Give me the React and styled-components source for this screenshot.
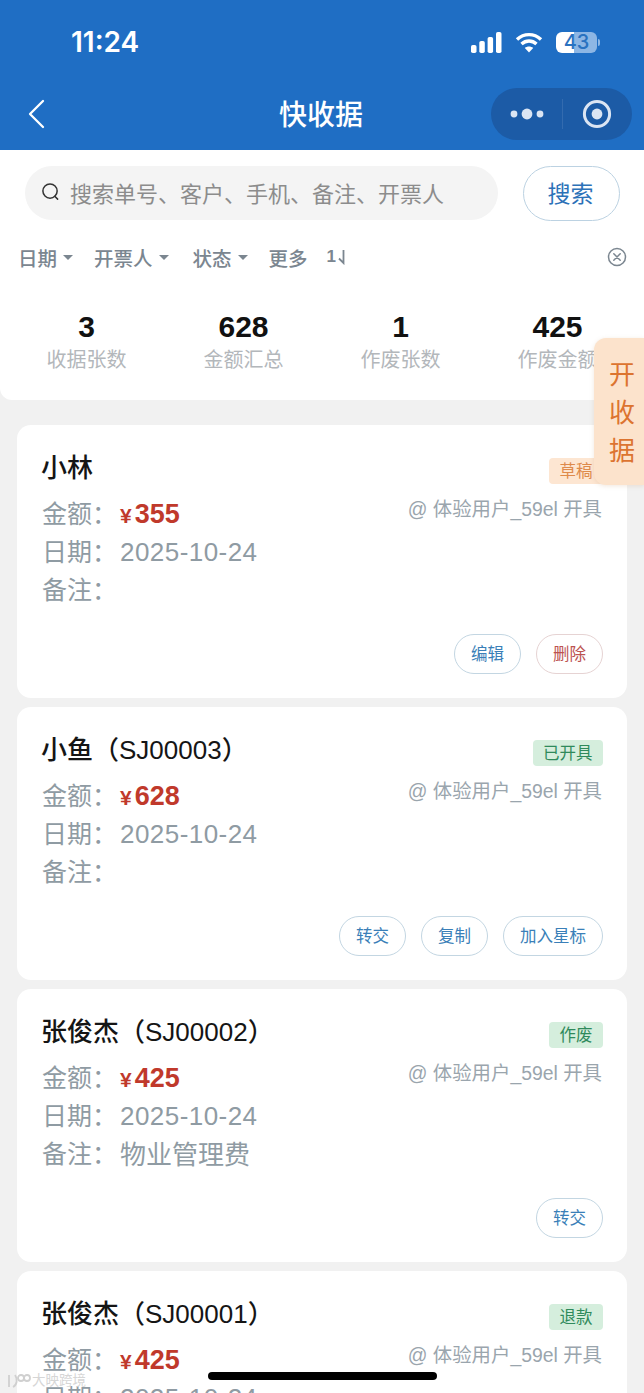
import React from "react";
import styled, { createGlobalStyle } from "styled-components";

const Global = createGlobalStyle`
  html, body { margin: 0; padding: 0; background: #f1f1f1; }
  body { font-family: "Liberation Sans", "Noto Sans CJK SC", sans-serif; }
  * { box-sizing: border-box; }
`;

const Phone = styled.div`
  position: relative;
  width: 644px;
  height: 1393px;
  overflow: hidden;
  background: #f1f1f1;
`;
const Header = styled.header`
  height: 150px;
  background: #1f6ec4;
  color: #fff;
  display: flex;
  flex-direction: column;
`;
const StatusBar = styled.div`
  height: 88px;
  padding: 26px 44px 0 71px;
  display: flex;
  justify-content: space-between;
  align-items: flex-start;
`;
const Time = styled.span`
  font-family: Inter, "Liberation Sans", sans-serif;
  font-size: 28px;
  font-weight: 600;
  line-height: 32px;
`;
const StatusIcons = styled.div`
  display: flex;
  align-items: center;
  gap: 13px;
  padding-top: 6px;
`;
const Battery = styled.div`
  width: 41px;
  height: 21px;
  border-radius: 6px;
  background: linear-gradient(90deg, #fff 0 44%, #8db6e4 44% 100%);
  color: #2a72c0;
  font-family: Inter, "Liberation Sans", sans-serif;
  font-size: 20px;
  font-weight: 500;
  line-height: 21px;
  text-align: center;
`;
const BatteryWrap = styled.div`
  display: flex;
  align-items: center;
  gap: 1px;
`;
const BatteryTip = styled.div`
  width: 2px;
  height: 7px;
  border-radius: 0 2px 2px 0;
  background: #8db6e4;
`;
const NavBar = styled.nav`
  height: 52px;
  padding: 0 12px 0 27px;
  display: flex;
  align-items: center;
  position: relative;
`;
const NavTitle = styled.h1`
  margin: 0;
  position: absolute;
  left: 0;
  right: 2px;
  top: 2px;
  text-align: center;
  font-size: 28px;
  font-weight: 500;
  line-height: 52px;
`;
const Capsule = styled.div`
  margin-left: auto;
  width: 141px;
  height: 52px;
  border-radius: 26px;
  background: #1c5ba6;
  display: grid;
  grid-template-columns: 71px 70px;
  align-items: center;
  justify-items: center;
  position: relative;
`;
const CapsuleDivider = styled.span`
  position: absolute;
  left: 71px;
  top: 11px;
  width: 1px;
  height: 30px;
  background: rgba(255, 255, 255, 0.1);
`;
const SearchPanel = styled.section`
  height: 86px;
  background: #fff;
  padding: 16px 24px 0 25px;
  display: flex;
  justify-content: space-between;
  align-items: flex-start;
`;
const SearchBox = styled.div`
  width: 473px;
  height: 54px;
  border-radius: 27px;
  background: #f4f4f4;
  display: flex;
  align-items: center;
  gap: 10px;
  padding: 0 0 3px 16px;
  color: #8c8c8c;
  font-size: 22px;
`;
const SearchBtn = styled.button`
  width: 97px;
  height: 55px;
  border-radius: 28px;
  background: #fff;
  border: 1px solid #bcd2e2;
  color: #2c72b8;
  font: inherit;
  font-size: 23px;
  padding: 0 2px 3px 0;
`;
const FilterPanel = styled.section`
  height: 164px;
  background: #fff;
  border-radius: 0 0 12px 12px;
`;
const FilterRow = styled.div`
  height: 44px;
  padding: 0 17px 2px 18px;
  display: flex;
  align-items: center;
  color: #7b8690;
  font-size: 19.5px;
  font-weight: 500;
`;
const Filter = styled.span`
  display: inline-flex;
  align-items: center;
  gap: 6px;
  margin-right: ${(p) => p.$gap}px;
`;
const Caret = styled.i`
  width: 0;
  height: 0;
  border-left: 5px solid transparent;
  border-right: 5px solid transparent;
  border-top: 5px solid #7b8690;
`;
const Sort = styled.span`
  font-size: 17px;
  font-weight: 700;
  display: inline-flex;
  align-items: center;
  gap: 2px;
`;
const Clear = styled.span`
  margin-left: auto;
  display: flex;
`;
const Stats = styled.div`
  display: grid;
  grid-template-columns: repeat(4, 157px);
  padding: 30px 0 0 8px;
`;
const Stat = styled.div`
  display: flex;
  flex-direction: column;
  align-items: center;
`;
const StatValue = styled.strong`
  font-size: 30px;
  line-height: 34px;
  color: #111;
`;
const StatLabel = styled.span`
  font-size: 20px;
  line-height: 32px;
  color: #b3b7bb;
  white-space: nowrap;
`;
const List = styled.main`
  padding: 25px 17px 0;
  display: flex;
  flex-direction: column;
  gap: 9px;
`;
const Card = styled.article`
  height: 273px;
  flex: none;
  background: #fff;
  border-radius: 14px;
  padding: 26px 24px 0 24px;
`;
const CardHead = styled.div`
  display: flex;
  justify-content: space-between;
  align-items: flex-start;
  height: 44px;
`;
const CardTitle = styled.h2`
  margin: 0;
  font-size: 26px;
  font-weight: 500;
  line-height: 34px;
  color: #151515;
`;
const Badge = styled.span`
  margin-top: 7px;
  height: 26px;
  padding: 0 10.5px;
  border-radius: 4px;
  font-size: 16.5px;
  line-height: 26px;
  background: ${(p) => (p.$tone === "draft" ? "#fde6d2" : "#d5eedd")};
  color: ${(p) => (p.$tone === "draft" ? "#de8a4b" : "#2f8a5b")};
`;
const CardBody = styled.div`
  display: flex;
  justify-content: space-between;
  align-items: flex-start;
  height: 114px;
`;
const Rows = styled.div`
  display: flex;
  flex-direction: column;
`;
const Row = styled.div`
  display: flex;
  align-items: center;
  height: 38px;
  color: #8f9ba3;
  font-size: 26px;
`;
const RowLabel = styled.span`
  width: 78px;
  margin-left: 1px;
  flex: none;
  font-size: 25px;
  padding-bottom: 4px;
`;
const NoteText = styled.span`
  font-size: 26px;
  padding-bottom: 4px;
`;
const DateText = styled.span`
  letter-spacing: 0.45px;
`;
const Amount = styled.strong`
  color: #c0392b;
  font-size: 27px;
`;
const Yen = styled.span`
  font-size: 21px;
  margin-right: 3px;
`;
const Author = styled.span`
  font-size: 19.4px;
  line-height: 28px;
  color: #9aa5ad;
  margin-right: 1px;
`;
const Actions = styled.div`
  margin-top: 25px;
  display: flex;
  justify-content: flex-end;
  gap: 15px;
`;
const Pill = styled.button`
  height: 40px;
  padding: 0 16px 3px;
  min-width: 67px;
  border-radius: 20px;
  background: #fff;
  border: 1px solid ${(p) => (p.$danger ? "#e6d3d3" : "#c3d6e2")};
  color: ${(p) => (p.$danger ? "#bc5350" : "#3a7fb8")};
  font: inherit;
  font-size: 16.5px;
`;
const FloatTab = styled.aside`
  position: absolute;
  left: 594px;
  top: 338px;
  width: 50px;
  height: 147px;
  padding: 18px 0 0 6px;
  background: #fce3cc;
  border-radius: 12px 0 0 12px;
  box-shadow: 0 1px 4px rgba(200, 160, 120, 0.25);
  color: #dc7430;
  font-size: 26px;
  line-height: 38px;
  text-align: center;
`;
const HomeBar = styled.div`
  position: absolute;
  left: 208px;
  top: 1372px;
  width: 229px;
  height: 8px;
  border-radius: 4px;
  background: #000;
`;
const Watermark = styled.div`
  position: absolute;
  left: 7px;
  top: 1372px;
  display: flex;
  align-items: center;
  gap: 1px;
  color: #d6d6d6;
  font-size: 13.5px;
  line-height: 18px;
`;

const cards = [
  { title: "小林", badge: "草稿", tone: "draft", amount: "355", note: "", actions: [["编辑"], ["删除", true]] },
  { title: "小鱼（SJ00003）", badge: "已开具", amount: "628", note: "", actions: [["转交"], ["复制"], ["加入星标"]] },
  { title: "张俊杰（SJ00002）", badge: "作废", amount: "425", note: "物业管理费", actions: [["转交"]] },
  { title: "张俊杰（SJ00001）", badge: "退款", amount: "425", note: "", actions: [] },
];

const stats = [["3", "收据张数"], ["628", "金额汇总"], ["1", "作废张数"], ["425", "作废金额"]];

export default function App() {
  return (
    <Phone>
      <Global />
      <Header>
        <StatusBar>
          <Time>11:24</Time>
          <StatusIcons>
            <svg width="31" height="21" viewBox="0 0 31 21" fill="#fff">
              <rect x="0" y="13" width="5.5" height="8" rx="1.8" />
              <rect x="8.3" y="9" width="5.5" height="12" rx="1.8" />
              <rect x="16.6" y="5" width="5.5" height="16" rx="1.8" />
              <rect x="25" y="0" width="5.5" height="21" rx="1.8" />
            </svg>
            <svg width="28" height="21" viewBox="0 0 28 21" fill="none" stroke="#fff" strokeWidth="3.4">
              <path d="M2 7.5 C9 1 19 1 26 7.5" />
              <path d="M6.5 12 C11 8 17 8 21.5 12" />
              <path d="M14 20.5 L9.8 16 C12 14 16 14 18.2 16 Z" fill="#fff" stroke="none" />
            </svg>
            <BatteryWrap>
              <Battery>43</Battery>
              <BatteryTip />
            </BatteryWrap>
          </StatusIcons>
        </StatusBar>
        <NavBar>
          <svg width="18" height="30" viewBox="0 0 18 30" fill="none" stroke="#fff" strokeWidth="2.3" strokeLinecap="round" strokeLinejoin="round">
            <path d="M16 2 L3 15 L16 28" />
          </svg>
          <NavTitle>快收据</NavTitle>
          <Capsule>
            <svg width="34" height="14" viewBox="0 0 34 14" fill="#dbe5f3">
              <circle cx="4" cy="7" r="3.4" />
              <circle cx="17" cy="7" r="5.4" />
              <circle cx="30" cy="7" r="3.4" />
            </svg>
            <CapsuleDivider />
            <svg width="30" height="30" viewBox="0 0 30 30">
              <circle cx="15" cy="15" r="12.6" fill="none" stroke="#dbe5f3" strokeWidth="3" />
              <circle cx="15" cy="15" r="5.4" fill="#dbe5f3" />
            </svg>
          </Capsule>
        </NavBar>
      </Header>
      <SearchPanel>
        <SearchBox>
          <svg width="19" height="19" viewBox="0 0 20 20" fill="none" stroke="#333" strokeWidth="1.6" strokeLinecap="round">
            <circle cx="9.5" cy="9.5" r="7.5" />
            <path d="M14.5 15 L17.5 18" />
          </svg>
          搜索单号、客户、手机、备注、开票人
        </SearchBox>
        <SearchBtn>搜索</SearchBtn>
      </SearchPanel>
      <FilterPanel>
        <FilterRow>
          <Filter $gap={21}>日期<Caret /></Filter>
          <Filter $gap={24}>开票人<Caret /></Filter>
          <Filter $gap={21}>状态<Caret /></Filter>
          <Filter $gap={19}>更多</Filter>
          <Sort>
            1
            <svg width="8" height="15" viewBox="0 0 8 15" fill="none" stroke="#7b8690" strokeWidth="1.8">
              <path d="M5.5 0 V13 L1 8.5" />
            </svg>
          </Sort>
          <Clear>
            <svg width="20" height="20" viewBox="0 0 20 20" fill="none" stroke="#7b8690" strokeWidth="1.5" strokeLinecap="round">
              <circle cx="10" cy="10" r="8.5" />
              <path d="M6.8 6.8 L13.2 13.2 M13.2 6.8 L6.8 13.2" />
            </svg>
          </Clear>
        </FilterRow>
        <Stats>
          {stats.map(([v, l]) => (
            <Stat key={l}>
              <StatValue>{v}</StatValue>
              <StatLabel>{l}</StatLabel>
            </Stat>
          ))}
        </Stats>
      </FilterPanel>
      <List>
        {cards.map((c) => (
          <Card key={c.title}>
            <CardHead>
              <CardTitle>{c.title}</CardTitle>
              <Badge $tone={c.tone}>{c.badge}</Badge>
            </CardHead>
            <CardBody>
              <Rows>
                <Row>
                  <RowLabel>金额：</RowLabel>
                  <Amount><Yen>¥</Yen>{c.amount}</Amount>
                </Row>
                <Row>
                  <RowLabel>日期：</RowLabel>
                  <DateText>2025-10-24</DateText>
                </Row>
                <Row>
                  <RowLabel>备注：</RowLabel>
                  <NoteText>{c.note}</NoteText>
                </Row>
              </Rows>
              <Author>@ 体验用户_59el 开具</Author>
            </CardBody>
            <Actions>
              {c.actions.map(([t, d]) => (
                <Pill key={t} $danger={d}>{t}</Pill>
              ))}
            </Actions>
          </Card>
        ))}
      </List>
      <FloatTab>开<br />收<br />据</FloatTab>
      <HomeBar />
      <Watermark>
        <svg width="24" height="16" viewBox="0 0 24 16" fill="none" stroke="#d0d0d0" strokeWidth="1.8">
          <path d="M2 2 V14 M6 14 C10 12 11 6 8 2" />
          <circle cx="14" cy="5" r="3" />
          <circle cx="20" cy="5" r="3" />
        </svg>
        大映跨境
      </Watermark>
    </Phone>
  );
}
